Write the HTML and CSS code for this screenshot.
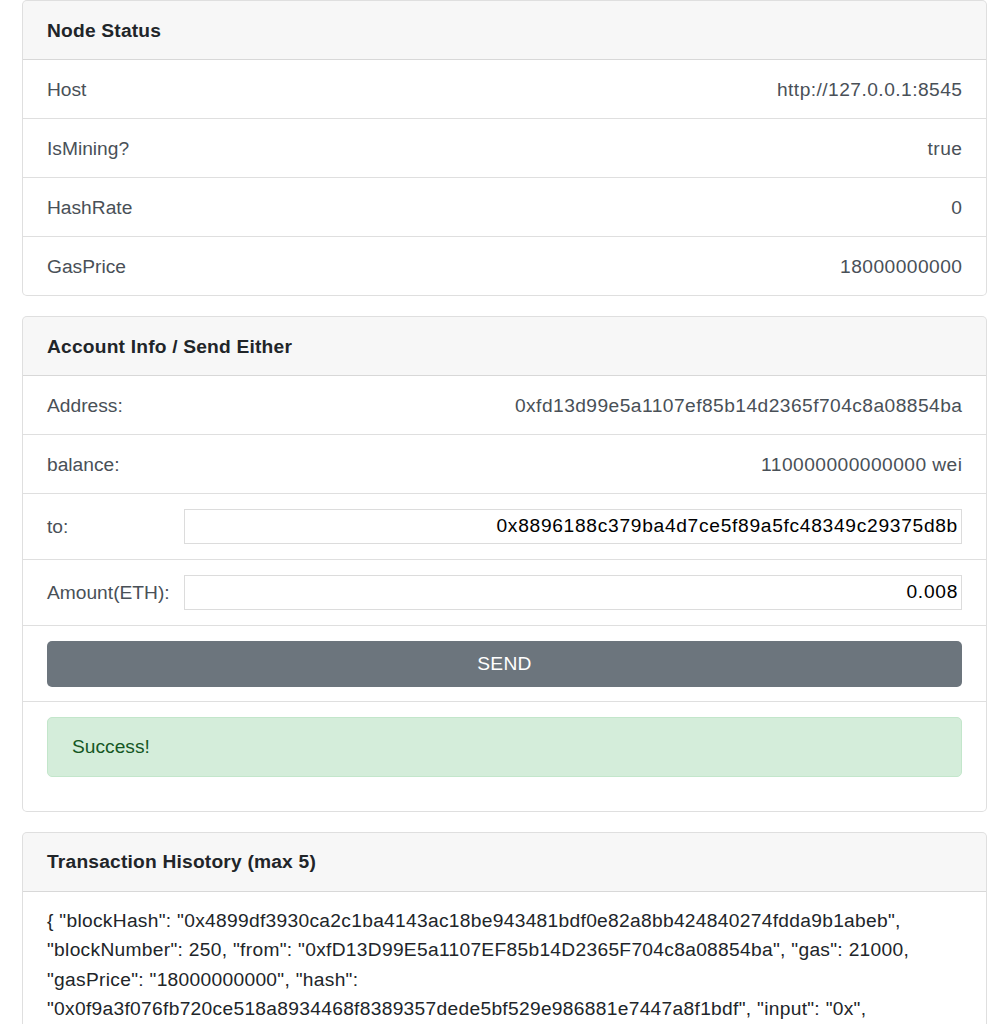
FILE: index.html
```html
<!DOCTYPE html>
<html lang="en">
<head>
    <meta charset="UTF-8">
    <meta name="viewport" content="width=device-width, initial-scale=1.0">
    <title>Ethereum Node</title>
    <link rel="stylesheet" href="styles.css">
</head>
<body>
    <div class="page">
        <div class="card">
            <div class="card-header">Node Status</div>
            <ul class="list-group">
                <li class="list-item"><span>Host</span><span class="value">http://127.0.0.1:8545</span></li>
                <li class="list-item"><span>IsMining?</span><span class="value">true</span></li>
                <li class="list-item"><span>HashRate</span><span class="value">0</span></li>
                <li class="list-item"><span>GasPrice</span><span class="value">18000000000</span></li>
            </ul>
        </div>

        <div class="card">
            <div class="card-header">Account Info / Send Either</div>
            <ul class="list-group">
                <li class="list-item"><span>Address:</span><span class="value">0xfd13d99e5a1107ef85b14d2365f704c8a08854ba</span></li>
                <li class="list-item"><span>balance:</span><span class="value">110000000000000 wei</span></li>
                <li class="list-item form-row">
                    <label for="to">to:</label>
                    <input type="text" id="to" class="field" value="0x8896188c379ba4d7ce5f89a5fc48349c29375d8b">
                </li>
                <li class="list-item form-row">
                    <label for="amount">Amount(ETH):</label>
                    <input type="text" id="amount" class="field" value="0.008">
                </li>
                <li class="list-item button-row">
                    <button class="btn btn-secondary">SEND</button>
                </li>
                <li class="list-item alert-row">
                    <div class="alert alert-success">Success!</div>
                </li>
            </ul>
        </div>

        <div class="card">
            <div class="card-header">Transaction Hisotory (max 5)</div>
            <ul class="list-group">
                <li class="list-item tx-item">{ "blockHash": "0x4899df3930ca2c1ba4143ac18be943481bdf0e82a8bb424840274fdda9b1abeb", "blockNumber": 250, "from": "0xfD13D99E5a1107EF85b14D2365F704c8a08854ba", "gas": 21000, "gasPrice": "18000000000", "hash": "0x0f9a3f076fb720ce518a8934468f8389357dede5bf529e986881e7447a8f1bdf", "input": "0x", "nonce": 0, "to": "0x8896188C379ba4D7ce5F89a5Fc48349c29375D8b", "transactionIndex": 0, "value": "8000000000000000" }</li>
            </ul>
        </div>
    </div>
</body>
</html>
```

FILE: styles.css
```css
html {
    font-size: 19.2px;
}
body {
    margin: 0;
    font-family: "Liberation Sans", Arial, sans-serif;
    font-size: 1rem;
    line-height: 29px;
    color: #212529;
    background-color: #fff;
}
.page {
    padding: 0 21px 0 22px;
}
.card {
    background-color: #fff;
    border: 1px solid rgba(0, 0, 0, 0.125);
    border-radius: 5px;
    margin-bottom: 20px;
    overflow: hidden;
}
.card-header {
    padding: 14.5px 24px;
    background-color: rgba(0, 0, 0, 0.03);
    border-bottom: 1px solid rgba(0, 0, 0, 0.125);
    font-weight: bold;
    letter-spacing: 0.2px;
}
.list-group {
    list-style: none;
    margin: 0;
    padding: 0;
}
.list-item {
    display: flex;
    justify-content: space-between;
    align-items: center;
    padding: 14.5px 24px;
    border-bottom: 1px solid rgba(0, 0, 0, 0.125);
    color: #495057;
}
.list-item:last-child {
    border-bottom: none;
}
.value {
    letter-spacing: 0.45px;
    margin-right: -0.45px;
}
.form-row {
    justify-content: flex-start;
    min-height: 36px;
}
.form-row label {
    width: 137px;
    flex-shrink: 0;
}
.field {
    flex: 1;
    height: 35px;
    box-sizing: border-box;
    padding: 0 3px;
    border: 1px solid #dcdcdc;
    border-radius: 0;
    font-family: inherit;
    font-size: 1rem;
    letter-spacing: 0.7px;
    color: #000;
    text-align: right;
    margin-top: -1px;
}
.btn {
    display: block;
    width: 100%;
    height: 46px;
    border: none;
    border-radius: 5px;
    font-family: inherit;
    font-size: 1rem;
    letter-spacing: 0.3px;
    cursor: pointer;
}
.btn-secondary {
    background-color: #6c757d;
    color: #fff;
}
.alert-row {
    display: block;
    padding-bottom: 34px;
}
.alert {
    padding: 14.5px 24px;
    border: 1px solid;
    border-radius: 5px;
}
.alert-success {
    background-color: #d4edda;
    border-color: #c3e6cb;
    color: #155724;
}
.tx-item {
    display: block;
    padding-right: 46px;
    color: #212529;
    line-height: 29.4px;
    letter-spacing: 0.3px;
}
```
